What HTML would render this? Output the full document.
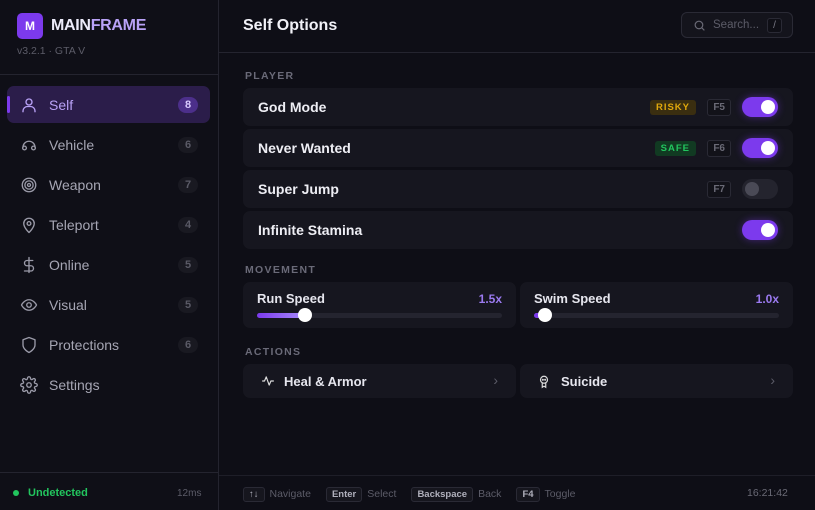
<!DOCTYPE html>
<html><head><style>
*{box-sizing:border-box;margin:0;padding:0}
body{width:815px;height:510px;background:#0e0e16;font-family:"Liberation Sans",sans-serif;color:#e6e6ee;position:relative;overflow:hidden}
.abs{position:absolute}
.side{left:0;top:0;width:219px;height:510px;background:#0f0f17;border-right:1px solid #24242f}
.nav{position:absolute;left:7px;width:203px;height:37px;border-radius:7px;display:flex;align-items:center;font-size:14px;color:#a6a6b4}
.nav svg{position:absolute;left:13px;width:18px;height:18px;fill:none;stroke:#9a9aa8;stroke-width:1.8;stroke-linecap:round;stroke-linejoin:round}
.nav .t{position:absolute;left:42px}
.nav .c{position:absolute;right:12px;width:20px;height:16px;border-radius:8px;background:#191921;color:#5a5a66;font-size:11px;font-weight:bold;text-align:center;line-height:16px}
.row{position:absolute;left:243px;width:550px;height:38px;background:#16161f;border-radius:7px}
.row .n{position:absolute;left:15px;top:11px;font-size:14px;font-weight:bold;color:#eeeef4}
.tg{position:absolute;right:15px;top:9px;width:36px;height:20px;border-radius:10px;background:#7c3aed;box-shadow:0 0 8px rgba(124,58,237,.45)}
.tg::after{content:"";position:absolute;right:3px;top:3px;width:14px;height:14px;border-radius:50%;background:#fff}
.tg.off{background:#24242e;box-shadow:none}.tg.off::after{left:3px;right:auto;background:#4a4a56}
.key{position:absolute;top:11px;height:17px;padding:0 5px;border:1px solid #2a2a35;border-radius:3px;background:#121219;color:#6a6a76;font-size:10px;font-weight:bold;line-height:15px}
.bd{position:absolute;top:12px;height:15px;padding:0 6px;border-radius:3px;font-size:9.5px;font-weight:bold;letter-spacing:1px;line-height:15px}
.lbl{position:absolute;left:245px;font-size:10.5px;font-weight:bold;letter-spacing:1.3px;color:#6a6a78}
.card{position:absolute;background:#16161f;border-radius:7px}
.fk{display:inline-block;height:15px;padding:0 5px;border:1px solid #2a2a35;border-radius:3px;background:#16161e;color:#b0b0bc;font-size:9.5px;font-weight:bold;line-height:13px;margin-right:5px}
.ft{color:#5c5c68;font-size:10.5px;margin-right:15px}
</style></head><body>
<div class="abs side">
 <div class="abs" style="left:17px;top:13px;width:26px;height:26px;border-radius:5px;background:#7c3aed;color:#fff;font-weight:bold;font-size:12px;text-align:center;line-height:26px">M</div>
 <div class="abs" style="left:51px;top:17px;font-size:16px;font-weight:bold;letter-spacing:-.3px;color:#ecebfa">MAIN<span style="color:#b9a2f7">FRAME</span></div>
 <div class="abs" style="left:17px;top:45px;font-size:10.5px;color:#5c5c68">v3.2.1 · GTA V</div>
 <div class="abs" style="left:0;top:74px;width:218px;height:1px;background:#24242f"></div>
 <div class="nav" style="top:86px;background:#2b1d4a;color:#b9a2f7"><div class="abs" style="left:0;top:10px;width:3px;height:17px;background:#7c3aed;border-radius:2px"></div><svg viewBox="0 0 24 24" style="stroke:#b9a2f7"><circle cx="12" cy="8" r="4"/><path d="M4 21v-1a6 6 0 0 1 6-6h4a6 6 0 0 1 6 6v1"/></svg><span class="t">Self</span><span class="c" style="background:#4c2f8a;color:#d8c9ff">8</span></div>
 <div class="nav" style="top:126px"><svg viewBox="0 0 24 24"><path d="M4 15a8 8 0 0 1 16 0"/><circle cx="6" cy="16" r="2.5"/><circle cx="18" cy="16" r="2.5"/></svg><span class="t">Vehicle</span><span class="c">6</span></div>
 <div class="nav" style="top:166px"><svg viewBox="0 0 24 24"><circle cx="12" cy="12" r="9"/><circle cx="12" cy="12" r="5.5"/><circle cx="12" cy="12" r="2"/></svg><span class="t">Weapon</span><span class="c">7</span></div>
 <div class="nav" style="top:206px"><svg viewBox="0 0 24 24"><path d="M12 22s7-6.5 7-12a7 7 0 0 0-14 0c0 5.5 7 12 7 12z"/><circle cx="12" cy="10" r="2.5"/></svg><span class="t">Teleport</span><span class="c">4</span></div>
 <div class="nav" style="top:246px"><svg viewBox="0 0 24 24"><path d="M12 2v20M17 6H9.5a3.5 3.5 0 0 0 0 7h5a3.5 3.5 0 0 1 0 7H6"/></svg><span class="t">Online</span><span class="c">5</span></div>
 <div class="nav" style="top:286px"><svg viewBox="0 0 24 24"><path d="M2 12s3.5-7 10-7 10 7 10 7-3.5 7-10 7S2 12 2 12z"/><circle cx="12" cy="12" r="3"/></svg><span class="t">Visual</span><span class="c">5</span></div>
 <div class="nav" style="top:326px"><svg viewBox="0 0 24 24"><path d="M12 22s8-4 8-10V5l-8-3-8 3v7c0 6 8 10 8 10z"/></svg><span class="t">Protections</span><span class="c">6</span></div>
 <div class="nav" style="top:366px"><svg viewBox="0 0 24 24"><circle cx="12" cy="12" r="3"/><path d="M19.4 15a1.7 1.7 0 0 0 .3 1.8l.1.1a2 2 0 1 1-2.8 2.8l-.1-.1a1.7 1.7 0 0 0-1.8-.3 1.7 1.7 0 0 0-1 1.5V21a2 2 0 1 1-4 0v-.1a1.7 1.7 0 0 0-1.1-1.5 1.7 1.7 0 0 0-1.8.3l-.1.1a2 2 0 1 1-2.8-2.8l.1-.1a1.7 1.7 0 0 0 .3-1.8 1.7 1.7 0 0 0-1.5-1H3a2 2 0 1 1 0-4h.1a1.7 1.7 0 0 0 1.5-1.1 1.7 1.7 0 0 0-.3-1.8l-.1-.1a2 2 0 1 1 2.8-2.8l.1.1a1.7 1.7 0 0 0 1.800.3H9a1.7 1.7 0 0 0 1-1.5V3a2 2 0 1 1 4 0v.1a1.7 1.7 0 0 0 1 1.5 1.7 1.7 0 0 0 1.8-.3l.1-.1a2 2 0 1 1 2.8 2.8l-.1.1a1.7 1.7 0 0 0-.3 1.8V9a1.7 1.7 0 0 0 1.5 1H21a2 2 0 1 1 0 4h-.1a1.7 1.7 0 0 0-1.5 1z"/></svg><span class="t">Settings</span></div>
 <div class="abs" style="left:0;top:472px;width:218px;height:1px;background:#24242f"></div>
 <div class="abs" style="left:13px;top:490px;width:6px;height:6px;border-radius:50%;background:#22c55e"></div>
 <div class="abs" style="left:28px;top:487px;font-size:11px;font-weight:bold;color:#22c55e">Undetected</div>
 <div class="abs" style="left:177px;top:488px;font-size:10px;color:#5c5c68">12ms</div>
</div>
<div class="abs" style="left:219px;top:52px;width:596px;height:1px;background:#24242f"></div>
<div class="abs" style="left:243px;top:17px;font-size:16px;font-weight:bold;color:#f2f2f8">Self Options</div>
<div class="abs" style="left:681px;top:12px;width:112px;height:26px;border:1px solid #2a2a35;border-radius:6px;background:#14141c">
 <svg class="abs" style="left:11px;top:6px" width="13" height="13" viewBox="0 0 24 24" fill="none" stroke="#6a6a76" stroke-width="2.2"><circle cx="11" cy="11" r="7"/><path d="M16 16l5 5"/></svg>
 <span class="abs" style="left:31px;top:6px;font-size:11.5px;color:#5c5c68">Search...</span>
 <span class="abs" style="left:85px;top:5px;width:15px;height:15px;border:1px solid #2a2a35;border-radius:3px;background:#0f0f16;font-size:10px;color:#7a7a86;text-align:center;line-height:13px">/</span>
</div>
<div class="lbl" style="top:70px">PLAYER</div>
<div class="row" style="top:88px"><span class="n">God Mode</span><span class="bd" style="right:97px;background:#3a2e10;color:#e0a80c">RISKY</span><span class="key" style="right:62px">F5</span><div class="tg"></div></div>
<div class="row" style="top:129px"><span class="n">Never Wanted</span><span class="bd" style="right:97px;background:#113a22;color:#22c55e">SAFE</span><span class="key" style="right:62px">F6</span><div class="tg"></div></div>
<div class="row" style="top:170px"><span class="n">Super Jump</span><span class="key" style="right:62px">F7</span><div class="tg off"></div></div>
<div class="row" style="top:211px"><span class="n">Infinite Stamina</span><div class="tg"></div></div>
<div class="lbl" style="top:264px">MOVEMENT</div>
<div class="card" style="left:243px;top:282px;width:273px;height:46px">
 <span class="abs" style="left:14px;top:9px;font-size:13px;font-weight:bold">Run Speed</span>
 <span class="abs" style="right:14px;top:10px;font-size:12px;font-weight:bold;color:#9b7af0">1.5x</span>
 <div class="abs" style="left:14px;top:31px;width:245px;height:5px;border-radius:3px;background:#24242f"></div>
 <div class="abs" style="left:14px;top:31px;width:48px;height:5px;border-radius:3px;background:linear-gradient(90deg,#7c3aed,#a78bfa)"></div>
 <div class="abs" style="left:55px;top:26px;width:14px;height:14px;border-radius:50%;background:#fff"></div>
</div>
<div class="card" style="left:520px;top:282px;width:273px;height:46px">
 <span class="abs" style="left:14px;top:9px;font-size:13px;font-weight:bold">Swim Speed</span>
 <span class="abs" style="right:14px;top:10px;font-size:12px;font-weight:bold;color:#9b7af0">1.0x</span>
 <div class="abs" style="left:14px;top:31px;width:245px;height:5px;border-radius:3px;background:#24242f"></div>
 <div class="abs" style="left:14px;top:31px;width:12px;height:5px;border-radius:3px;background:#7c3aed"></div>
 <div class="abs" style="left:18px;top:26px;width:14px;height:14px;border-radius:50%;background:#fff"></div>
</div>
<div class="lbl" style="top:346px">ACTIONS</div>
<div class="card" style="left:243px;top:364px;width:273px;height:34px">
 <svg class="abs" style="left:18px;top:10px" width="14" height="14" viewBox="0 0 24 24" fill="none" stroke="#ddd" stroke-width="2" stroke-linejoin="round"><path d="M2 12h4l3-7 5 14 3-7h5"/></svg>
 <span class="abs" style="left:41px;top:10px;font-size:13px;font-weight:bold">Heal &amp; Armor</span>
 <span class="abs" style="right:18px;top:8px;font-size:14px;color:#5c5c68">›</span>
</div>
<div class="card" style="left:520px;top:364px;width:273px;height:34px">
 <svg class="abs" style="left:17px;top:10px" width="14" height="15" viewBox="0 0 24 24" fill="none" stroke="#ddd" stroke-width="2"><circle cx="12" cy="9" r="6"/><path d="M9 14v8l3-2 3 2v-8"/><circle cx="10" cy="9" r=".8"/><circle cx="14" cy="9" r=".8"/></svg>
 <span class="abs" style="left:41px;top:10px;font-size:13px;font-weight:bold">Suicide</span>
 <span class="abs" style="right:18px;top:8px;font-size:14px;color:#5c5c68">›</span>
</div>
<div class="abs" style="left:219px;top:475px;width:596px;height:1px;background:#1e1e28"></div>
<div class="abs" style="left:243px;top:485px;white-space:nowrap;line-height:15px">
 <span class="fk">↑↓</span><span class="ft">Navigate</span><span class="fk">Enter</span><span class="ft">Select</span><span class="fk">Backspace</span><span class="ft">Back</span><span class="fk">F4</span><span class="ft">Toggle</span>
</div>
<div class="abs" style="left:747px;top:487px;font-size:10.5px;color:#6a6a76">16:21:42</div>
</body></html>
